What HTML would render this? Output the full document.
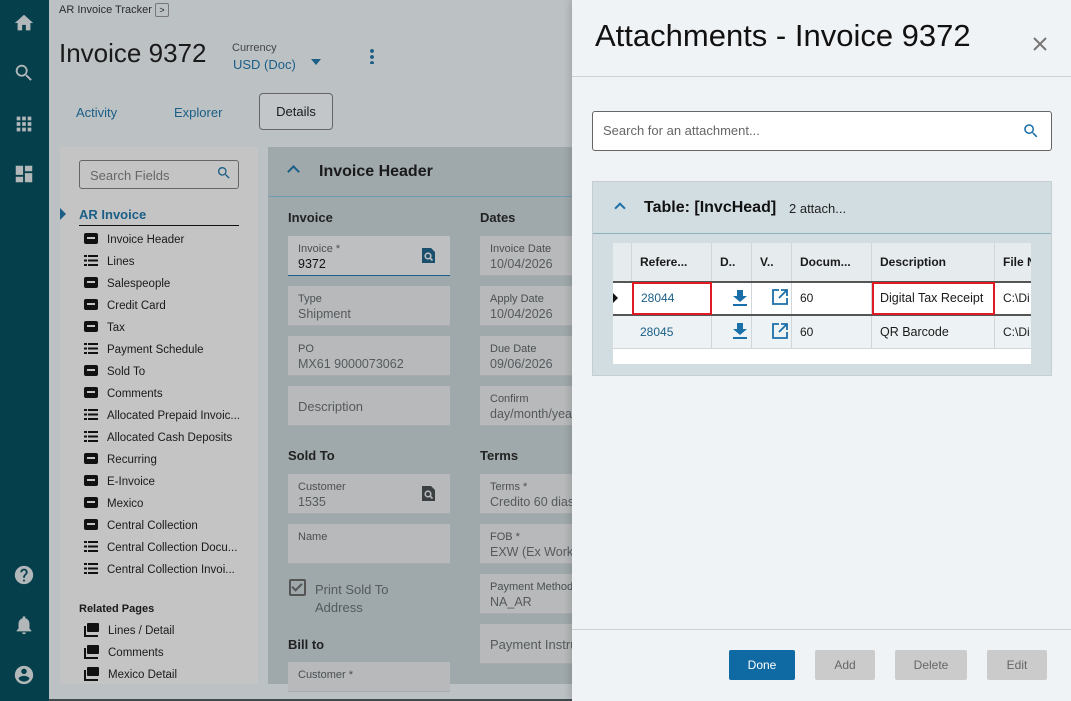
<!DOCTYPE html>
<html><head><meta charset="utf-8"><style>
*{box-sizing:border-box;margin:0;padding:0}
body{width:1071px;height:701px;overflow:hidden;position:relative;font-family:"Liberation Sans",sans-serif;background:#bcc1c4;color:#1a1a1a}
.a{position:absolute}
.nav{left:0;top:0;width:49px;height:701px;background:#053f4b}
.nav svg{position:absolute;left:13px;width:22px;height:22px;fill:#b2b7ba}
.list{left:60px;top:147px;width:198px;height:537px;background:#c4c4c4}
.li{position:absolute;left:24px;font-size:11.5px;color:#1a1a1a;white-space:nowrap}
.ic1{display:inline-block;width:14px;height:11px;background:#111;border-radius:2px;vertical-align:-1px;margin-right:9px;position:relative}
.ic1:after{content:"";position:absolute;left:3px;top:4px;width:8px;height:2px;background:#c4c4c4}
.ic2{display:inline-block;width:14px;height:11px;vertical-align:-1px;margin-right:9px;background:linear-gradient(#111 0 2px,transparent 2px 4.5px,#111 4.5px 6.5px,transparent 6.5px 9px,#111 9px 11px);position:relative}
.ic2:after{content:"";position:absolute;left:3px;top:0;width:1px;height:11px;background:#c4c4c4}
.ic3{display:inline-block;width:15px;height:12px;vertical-align:-1px;margin-right:9px;position:relative}
.ic3:before{content:"";position:absolute;left:0;top:3px;width:12px;height:9px;border-left:2px solid #111;border-bottom:2px solid #111}
.ic3:after{content:"";position:absolute;left:3px;top:0;width:12px;height:9px;background:#111;border-radius:1px}
.form{left:268px;top:147px;width:304px;height:537px;background:#9fa8ab}
.f{position:absolute;width:162px;height:40px;background:#b7b9ba;border-bottom:1px solid #a9abac}
.f .l{position:absolute;left:10px;top:7px;font-size:11px;color:#4a4f52}
.f .v{position:absolute;left:10px;top:21px;font-size:12.5px;color:#555a5d}
.sec{position:absolute;font-size:13px;font-weight:bold;color:#222}
.panel{left:572px;top:0;width:499px;height:701px;background:#f0f3f6;box-shadow:-3px 0 6px rgba(0,0,0,.12)}
.th{position:absolute;top:0;height:38px;border-right:1px solid #d0d6da;font-size:12px;font-weight:bold;padding:12px 0 0 8px;white-space:nowrap;overflow:hidden}
.td{position:absolute;font-size:12px;padding-left:8px;border-right:1px solid #d0d6da;white-space:nowrap;overflow:hidden}
.btn{position:absolute;top:650px;height:30px;border-radius:2px;font-size:12px;text-align:center;line-height:30px}
</style></head><body>
<div class="a nav">
<svg style="top:12px" viewBox="0 0 24 24"><path d="M10 20v-6h4v6h5v-8h3L12 3 2 12h3v8z"/></svg>
<svg style="top:62px" viewBox="0 0 24 24"><path d="M15.5 14h-.8l-.3-.3A6.5 6.5 0 1 0 9.5 16a6.5 6.5 0 0 0 4.2-1.6l.3.3v.8l5 5 1.5-1.5-5-5zm-6 0A4.5 4.5 0 1 1 14 9.5 4.5 4.5 0 0 1 9.5 14z"/></svg>
<svg style="top:113px" viewBox="0 0 24 24"><path d="M4 4h4v4H4zm6 0h4v4h-4zm6 0h4v4h-4zM4 10h4v4H4zm6 0h4v4h-4zm6 0h4v4h-4zM4 16h4v4H4zm6 0h4v4h-4zm6 0h4v4h-4z"/></svg>
<svg style="top:163px" viewBox="0 0 24 24"><path d="M3 13h8V3H3zm0 8h8v-6H3zm10 0h8V11h-8zm0-18v6h8V3z"/></svg>
<svg style="top:564px" viewBox="0 0 24 24"><path d="M12 2a10 10 0 1 0 0 20 10 10 0 0 0 0-20zm1 17h-2v-2h2zm2.1-7.8-.9.9c-.7.7-1.2 1.3-1.2 2.9h-2v-.5c0-1.1.5-2.1 1.2-2.8l1.2-1.3A2 2 0 1 0 10 9H8a4 4 0 1 1 8 0c0 .9-.4 1.7-.9 2.2z"/></svg>
<svg style="top:614px" viewBox="0 0 24 24"><path d="M12 22a2 2 0 0 0 2-2h-4a2 2 0 0 0 2 2zm6-6v-5c0-3.1-1.6-5.6-4.5-6.3V4a1.5 1.5 0 0 0-3 0v.7C7.6 5.4 6 7.9 6 11v5l-2 2v1h16v-1z"/></svg>
<svg style="top:664px" viewBox="0 0 24 24"><path d="M12 2a10 10 0 1 0 0 20 10 10 0 0 0 0-20zm0 3a3 3 0 1 1 0 6 3 3 0 0 1 0-6zm0 14.2a7.2 7.2 0 0 1-6-3.2c0-2 4-3.1 6-3.1s6 1.1 6 3.1a7.2 7.2 0 0 1-6 3.2z"/></svg>
</div>
<div class="a" style="left:49px;top:699px;width:523px;height:2px;background:#3f4a4f"></div>
<div class="a" style="left:59px;top:4px;font-size:11px;color:#2a2a2a">AR Invoice Tracker</div>
<div class="a" style="left:155px;top:3px;width:14px;height:14px;border:1px solid #777;border-radius:2px;font-size:9px;text-align:center;line-height:12px">&gt;</div>
<div class="a" style="left:59px;top:38px;font-size:26px;color:#1a1a1a">Invoice 9372</div>
<div class="a" style="left:232px;top:42px;font-size:11px;color:#444">Currency</div>
<div class="a" style="left:233px;top:57px;font-size:13px;color:#1b5e86">USD (Doc)</div>
<div class="a" style="left:311px;top:59px;width:0;height:0;border-left:5px solid transparent;border-right:5px solid transparent;border-top:6px solid #1b5e86"></div>
<div class="a" style="left:370px;top:48px;width:4px;height:16px;background:radial-gradient(circle,#1b5e86 1.8px,transparent 2px) 0 0/4px 6px"></div>
<div class="a" style="left:76px;top:105px;font-size:13px;color:#1b5e86">Activity</div>
<div class="a" style="left:174px;top:105px;font-size:13px;color:#1b5e86">Explorer</div>
<div class="a" style="left:259px;top:93px;width:74px;height:37px;border:1px solid #666;border-radius:4px;font-size:13px;text-align:center;line-height:36px;background:#c2c6c9">Details</div>

<div class="a list">
<div class="a" style="left:19px;top:13px;width:160px;height:29px;border:1px solid #666;border-radius:3px;font-size:13px;color:#666;padding:7px 10px">Search Fields</div>
<svg class="a" style="left:156px;top:18px" width="16" height="16" viewBox="0 0 24 24"><path fill="#1b5e86" d="M15.5 14h-.8l-.3-.3A6.5 6.5 0 1 0 9.5 16a6.5 6.5 0 0 0 4.2-1.6l.3.3v.8l5 5 1.5-1.5-5-5zm-6 0A4.5 4.5 0 1 1 14 9.5 4.5 4.5 0 0 1 9.5 14z"/></svg>
<div class="a" style="left:0;top:61px;width:0;height:0;border-top:6px solid transparent;border-bottom:6px solid transparent;border-left:6px solid #1b5e86"></div>
<div class="a" style="left:19px;top:60px;font-size:13px;font-weight:bold;color:#1b5e86">AR Invoice</div>
<div class="a" style="left:19px;top:78px;width:160px;height:1px;background:#111"></div>
<div class="li" style="top:86px"><i class="ic1"></i>Invoice Header</div>
<div class="li" style="top:108px"><i class="ic2"></i>Lines</div>
<div class="li" style="top:130px"><i class="ic1"></i>Salespeople</div>
<div class="li" style="top:152px"><i class="ic1"></i>Credit Card</div>
<div class="li" style="top:174px"><i class="ic1"></i>Tax</div>
<div class="li" style="top:196px"><i class="ic2"></i>Payment Schedule</div>
<div class="li" style="top:218px"><i class="ic1"></i>Sold To</div>
<div class="li" style="top:240px"><i class="ic1"></i>Comments</div>
<div class="li" style="top:262px"><i class="ic2"></i>Allocated Prepaid Invoic...</div>
<div class="li" style="top:284px"><i class="ic2"></i>Allocated Cash Deposits</div>
<div class="li" style="top:306px"><i class="ic1"></i>Recurring</div>
<div class="li" style="top:328px"><i class="ic1"></i>E-Invoice</div>
<div class="li" style="top:350px"><i class="ic1"></i>Mexico</div>
<div class="li" style="top:372px"><i class="ic1"></i>Central Collection</div>
<div class="li" style="top:394px"><i class="ic2"></i>Central Collection Docu...</div>
<div class="li" style="top:416px"><i class="ic2"></i>Central Collection Invoi...</div>
<div class="a" style="left:19px;top:456px;font-size:11px;font-weight:bold">Related Pages</div>
<div class="li" style="top:476px"><i class="ic3"></i>Lines / Detail</div>
<div class="li" style="top:498px"><i class="ic3"></i>Comments</div>
<div class="li" style="top:520px"><i class="ic3"></i>Mexico Detail</div>
</div>

<div class="a form">
<div class="a" style="left:0;top:49px;width:304px;height:1px;background:#6e9db3"></div>
<div class="a" style="left:21px;top:20px;width:9px;height:9px;border-left:2px solid #1b5e86;border-top:2px solid #1b5e86;transform:rotate(45deg)"></div>
<div class="a" style="left:51px;top:16px;font-size:16px;font-weight:bold;color:#1a1a1a">Invoice Header</div>
<div class="sec" style="left:20px;top:63px">Invoice</div>
<div class="sec" style="left:212px;top:63px">Dates</div>
<div class="f" style="left:20px;top:89px;border-bottom:1px solid #1b5e86;background:#bdbfc0"><div class="l">Invoice *</div><div class="v" style="color:#111">9372</div>
<svg class="a" style="left:134px;top:12px" width="13" height="15" viewBox="0 0 13 15"><path fill="#1b4f6e" d="M0 0h9l4 4v11H0z"/><circle cx="6" cy="8" r="2.8" fill="none" stroke="#bdbfc0" stroke-width="1.6"/><path d="M8 10l2.5 2.5" stroke="#bdbfc0" stroke-width="1.6"/></svg></div>
<div class="f" style="left:20px;top:139px"><div class="l">Type</div><div class="v">Shipment</div></div>
<div class="f" style="left:20px;top:189px"><div class="l">PO</div><div class="v">MX61 9000073062</div></div>
<div class="f" style="left:20px;top:239px"><div class="v" style="top:13px;font-size:13px">Description</div></div>
<div class="f" style="left:212px;top:89px"><div class="l">Invoice Date</div><div class="v">10/04/2026</div></div>
<div class="f" style="left:212px;top:139px"><div class="l">Apply Date</div><div class="v">10/04/2026</div></div>
<div class="f" style="left:212px;top:189px"><div class="l">Due Date</div><div class="v">09/06/2026</div></div>
<div class="f" style="left:212px;top:239px"><div class="l">Confirm</div><div class="v">day/month/year</div></div>
<div class="sec" style="left:20px;top:301px">Sold To</div>
<div class="sec" style="left:212px;top:301px">Terms</div>
<div class="f" style="left:20px;top:327px"><div class="l">Customer</div><div class="v">1535</div>
<svg class="a" style="left:134px;top:12px" width="13" height="15" viewBox="0 0 13 15"><path fill="#3a3f42" d="M0 0h9l4 4v11H0z"/><circle cx="6" cy="8" r="2.8" fill="none" stroke="#b7b9ba" stroke-width="1.6"/><path d="M8 10l2.5 2.5" stroke="#b7b9ba" stroke-width="1.6"/></svg></div>
<div class="f" style="left:20px;top:377px"><div class="l">Name</div></div>
<div class="a" style="left:21px;top:432px;width:17px;height:17px;border:2px solid #555;border-radius:2px"></div>
<div class="a" style="left:26px;top:434px;width:6px;height:10px;border-right:2px solid #555;border-bottom:2px solid #555;transform:rotate(45deg)"></div>
<div class="a" style="left:47px;top:434px;font-size:13px;color:#555a5d;line-height:18px">Print Sold To<br>Address</div>
<div class="sec" style="left:20px;top:490px">Bill to</div>
<div class="f" style="left:20px;top:515px;height:30px"><div class="l">Customer *</div></div>
<div class="f" style="left:212px;top:327px"><div class="l">Terms *</div><div class="v">Credito 60 dias</div></div>
<div class="f" style="left:212px;top:377px"><div class="l">FOB *</div><div class="v">EXW (Ex Works)</div></div>
<div class="f" style="left:212px;top:427px"><div class="l">Payment Method</div><div class="v">NA_AR</div></div>
<div class="f" style="left:212px;top:477px"><div class="v" style="top:13px;font-size:13px">Payment Instructions</div></div>
</div>

<div class="a panel">
<div class="a" style="left:23px;top:18px;font-size:31px;color:#111">Attachments - Invoice 9372</div>
<svg class="a" style="left:461px;top:37px" width="14" height="14" viewBox="0 0 14 14"><path d="M1 1l12 12M13 1 1 13" stroke="#777" stroke-width="2"/></svg>
<div class="a" style="left:0;top:76px;width:499px;height:1px;background:#cdd1d5"></div>
<div class="a" style="left:20px;top:111px;width:460px;height:40px;background:#fff;border:1px solid #666;border-radius:3px;font-size:13px;color:#666;padding:11px 10px">Search for an attachment...</div>
<svg class="a" style="left:450px;top:122px" width="18" height="18" viewBox="0 0 24 24"><path fill="#1b6fa8" d="M15.5 14h-.8l-.3-.3A6.5 6.5 0 1 0 9.5 16a6.5 6.5 0 0 0 4.2-1.6l.3.3v.8l5 5 1.5-1.5-5-5zm-6 0A4.5 4.5 0 1 1 14 9.5 4.5 4.5 0 0 1 9.5 14z"/></svg>
<div class="a" style="left:20px;top:181px;width:460px;height:195px;background:#d2dde2;border:1px solid #c6cdd1">
<div class="a" style="left:0;top:51px;width:458px;height:1px;background:#8fb0c0"></div>
<div class="a" style="left:23px;top:22px;width:8px;height:8px;border-left:2px solid #1b6fa8;border-top:2px solid #1b6fa8;transform:rotate(45deg)"></div>
<div class="a" style="left:51px;top:17px;font-size:16px;font-weight:bold;color:#111">Table: [InvcHead]</div>
<div class="a" style="left:196px;top:19px;font-size:13px;color:#222">2 attach...</div>
</div>
<div class="a" style="left:41px;top:243px;width:418px;height:121px;background:#fff;overflow:hidden">
<div class="a" style="left:0;top:0;width:418px;height:38px;background:#e6ebee"></div>
<div class="th" style="left:0;width:19px"></div>
<div class="th" style="left:19px;width:80px">Refere...</div>
<div class="th" style="left:99px;width:40px">D..</div>
<div class="th" style="left:139px;width:40px">V..</div>
<div class="th" style="left:179px;width:80px">Docum...</div>
<div class="th" style="left:259px;width:123px">Description</div>
<div class="th" style="left:382px;width:60px">File N</div>
<div class="a" style="left:0;top:38px;width:418px;height:35px;border-top:2px solid #555;border-bottom:2px solid #555"></div>
<div class="a" style="left:0;top:50px;width:0;height:0;border-top:5px solid transparent;border-bottom:5px solid transparent;border-left:5px solid #111"></div>
<div class="a" style="left:0;top:73px;width:418px;height:33px;background:#edf3f5;border-bottom:1px solid #d0d6da"></div>
<div class="td" style="left:19px;top:39px;height:33px;width:80px;line-height:29px;color:#1b5e86;border:2px solid #e01b24;padding-left:7px">28044</div>
<div class="td" style="left:19px;top:73px;height:33px;width:80px;line-height:33px;color:#1b5e86">28045</div>
<div class="td" style="left:99px;top:40px;height:31px;width:40px"></div>
<div class="td" style="left:99px;top:73px;height:33px;width:40px"></div>
<div class="td" style="left:139px;top:40px;height:31px;width:40px"></div>
<div class="td" style="left:139px;top:73px;height:33px;width:40px"></div>
<div class="td" style="left:179px;top:40px;height:31px;width:80px;line-height:31px">60</div>
<div class="td" style="left:179px;top:73px;height:33px;width:80px;line-height:33px">60</div>
<div class="td" style="left:259px;top:39px;height:33px;width:123px;line-height:29px;border:2px solid #e01b24;padding-left:6px;font-size:12.5px">Digital Tax Receipt</div>
<div class="td" style="left:259px;top:73px;height:33px;width:123px;line-height:33px;font-size:12.5px">QR Barcode</div>
<div class="td" style="left:382px;top:40px;height:31px;width:40px;line-height:31px">C:\Di</div>
<div class="td" style="left:382px;top:73px;height:33px;width:40px;line-height:33px">C:\Di</div>
<svg class="a" style="left:120px;top:47px" width="14" height="16" viewBox="0 0 14 16"><path fill="#1b6fa8" d="M4 0h6v6h4L7 12 0 6h4zM0 14h14v2H0z"/></svg>
<svg class="a" style="left:120px;top:80px" width="14" height="16" viewBox="0 0 14 16"><path fill="#1b6fa8" d="M4 0h6v6h4L7 12 0 6h4zM0 14h14v2H0z"/></svg>
<svg class="a" style="left:159px;top:46px" width="16" height="16" viewBox="0 0 16 16"><path fill="none" stroke="#1b6fa8" stroke-width="1.8" d="M7 1H1v14h14V9M9 1h6v6M15 1 7 9"/></svg>
<svg class="a" style="left:159px;top:80px" width="16" height="16" viewBox="0 0 16 16"><path fill="none" stroke="#1b6fa8" stroke-width="1.8" d="M7 1H1v14h14V9M9 1h6v6M15 1 7 9"/></svg>
</div>
<div class="a" style="left:0;top:629px;width:499px;height:1px;background:#cdd1d5"></div>
<div class="btn" style="left:157px;width:66px;background:#0f6aa3;color:#fff">Done</div>
<div class="btn" style="left:243px;width:60px;background:#cbcbcb;color:#666">Add</div>
<div class="btn" style="left:323px;width:72px;background:#cbcbcb;color:#666">Delete</div>
<div class="btn" style="left:415px;width:60px;background:#cbcbcb;color:#666">Edit</div>
</div>
</body></html>
